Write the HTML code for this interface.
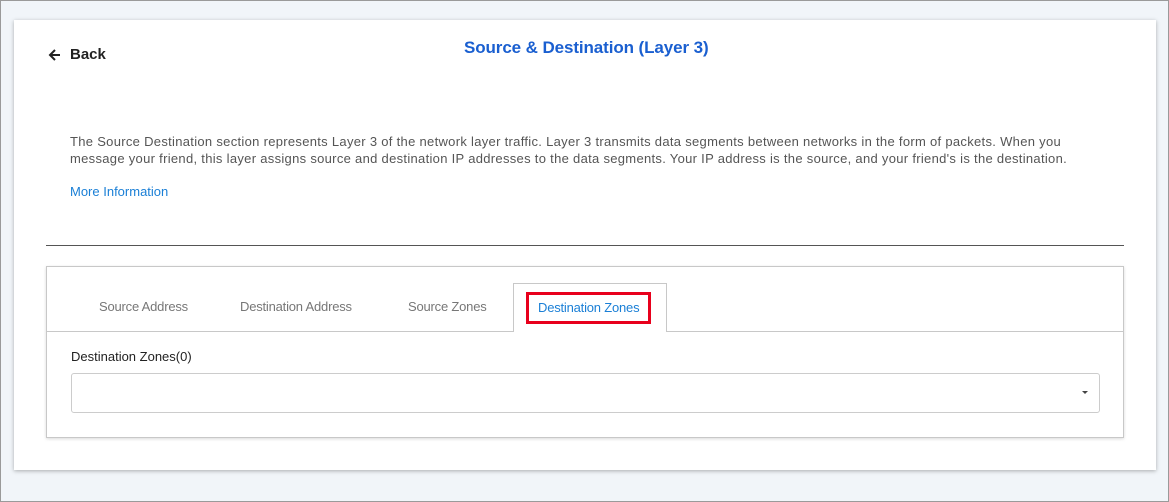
<!DOCTYPE html>
<html><head><style>
*{margin:0;padding:0;box-sizing:border-box}
body{width:1169px;height:502px;background:#f1f5f9;border:1px solid #9a9a9a;font-family:"Liberation Sans",sans-serif;position:relative;overflow:hidden}
.card{position:absolute;left:13px;top:19px;width:1142px;height:450px;background:#fff;box-shadow:0 1px 4px rgba(0,0,0,.3)}
.abs{position:absolute;white-space:nowrap}
</style></head><body>
<div class="card">
<svg class="abs" style="left:34px;top:28px" width="14" height="14" viewBox="0 0 14 14"><path d="M12 7H2M7 2L2 7l5 5" stroke="#222" stroke-width="2" fill="none"/></svg>
<div class="abs" style="left:56px;top:26px;font-size:15px;font-weight:bold;color:#222">Back</div>
<div class="abs" style="left:450px;top:18px;font-size:17px;font-weight:bold;color:#1a5fd0;letter-spacing:-0.1px">Source &amp; Destination (Layer 3)</div>
<div class="abs" style="left:56px;top:113px;font-size:13px;color:#555;line-height:17px;letter-spacing:0.3px">The Source Destination section represents Layer 3 of the network layer traffic. Layer 3 transmits data segments between networks in the form of packets. When you<br>message your friend, this layer assigns source and destination IP addresses to the data segments. Your IP address is the source, and your friend's is the destination.</div>
<div class="abs" style="left:56px;top:164px;font-size:13px;color:#1a7fd6">More Information</div>
<div class="abs" style="left:32px;top:225px;width:1078px;height:1px;background:#555"></div>
<div class="abs" style="left:32px;top:246px;width:1078px;height:172px;border:1px solid #c8c8c8;box-shadow:0 1px 3px rgba(0,0,0,.15)">
 <div class="abs" style="left:0;top:64px;width:1076px;height:1px;background:#c8c8c8"></div>
 <div class="abs" style="left:466px;top:16px;width:154px;height:49px;background:#fff;border:1px solid #c8c8c8;border-bottom:none"></div>
 <div class="abs" style="left:52px;top:32px;font-size:13px;color:#777;letter-spacing:-0.2px">Source Address</div>
 <div class="abs" style="left:193px;top:32px;font-size:13px;color:#777;letter-spacing:-0.2px">Destination Address</div>
 <div class="abs" style="left:361px;top:32px;font-size:13px;color:#777;letter-spacing:-0.2px">Source Zones</div>
 <div class="abs" style="left:479px;top:25px;width:125px;height:32px;border:3px solid #e8001c"></div>
 <div class="abs" style="left:491px;top:33px;font-size:13px;color:#1a7fd6;letter-spacing:-0.2px">Destination Zones</div>
 <div class="abs" style="left:24px;top:82px;font-size:13px;color:#222">Destination Zones(0)</div>
 <div class="abs" style="left:24px;top:106px;width:1029px;height:40px;border:1px solid #ccc;border-radius:3px"></div>
 <div class="abs" style="left:1035px;top:124px;width:0;height:0;border-left:3px solid transparent;border-right:3px solid transparent;border-top:3px solid #444"></div>
</div>
</div>
</body></html>
